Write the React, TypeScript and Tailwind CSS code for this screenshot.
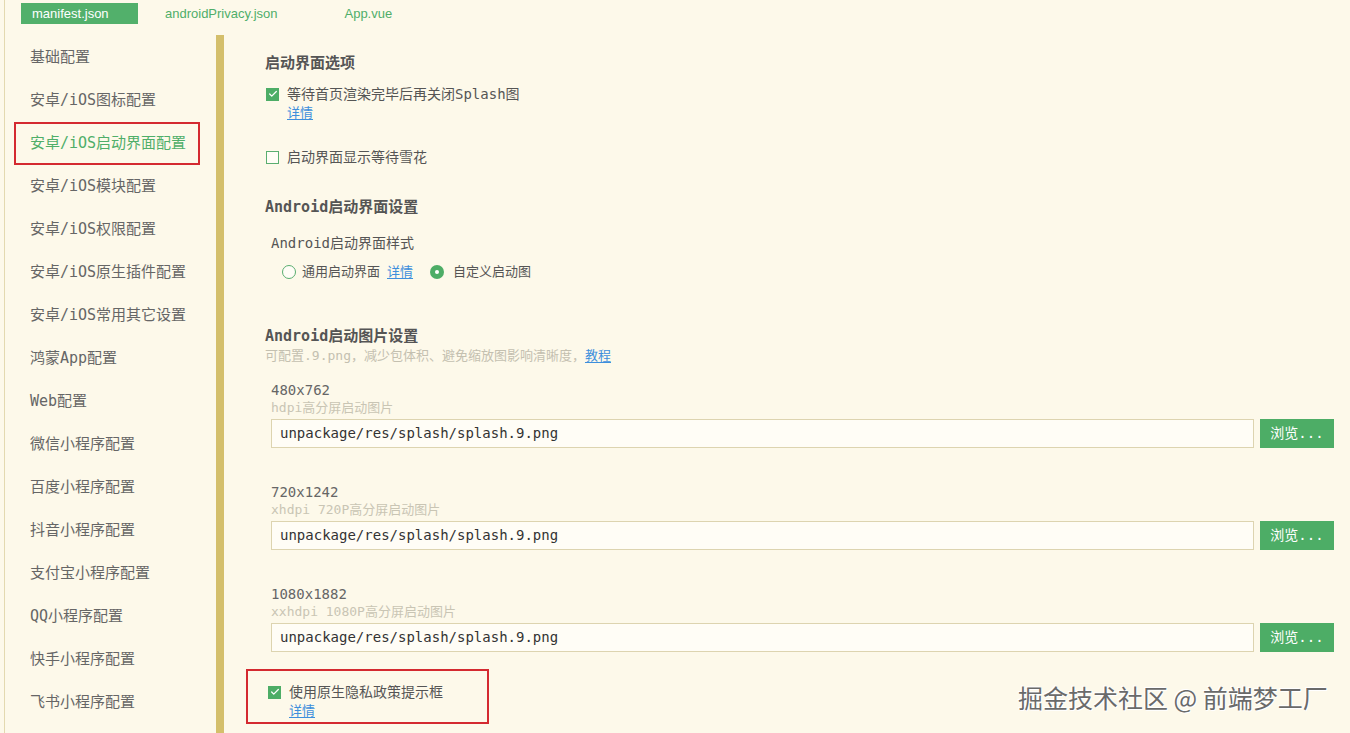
import { Check } from "lucide-react";

const mono = "font-['DejaVu_Sans_Mono','Noto_Sans_CJK_SC',monospace]";

const navItems = [
  "基础配置",
  "安卓/iOS图标配置",
  "安卓/iOS启动界面配置",
  "安卓/iOS模块配置",
  "安卓/iOS权限配置",
  "安卓/iOS原生插件配置",
  "安卓/iOS常用其它设置",
  "鸿蒙App配置",
  "Web配置",
  "微信小程序配置",
  "百度小程序配置",
  "抖音小程序配置",
  "支付宝小程序配置",
  "QQ小程序配置",
  "快手小程序配置",
  "飞书小程序配置",
];

const splashSizes = [
  { size: "480x762", desc: "hdpi高分屏启动图片" },
  { size: "720x1242", desc: "xhdpi 720P高分屏启动图片" },
  { size: "1080x1882", desc: "xxhdpi 1080P高分屏启动图片" },
];

function Checkbox({ checked }: { checked: boolean }) {
  return checked ? (
    <span className="flex h-[13px] w-[13px] shrink-0 items-center justify-center bg-[#4dad66]">
      <Check size={10} strokeWidth={3} className="text-white" />
    </span>
  ) : (
    <span className="h-[13px] w-[13px] shrink-0 border border-[#5aae70] bg-[#fffdf6]" />
  );
}

function Radio({ checked }: { checked: boolean }) {
  return checked ? (
    <span className="flex h-[14px] w-[14px] shrink-0 items-center justify-center rounded-full bg-[#4dad66]">
      <span className="h-[4px] w-[4px] rounded-full bg-white" />
    </span>
  ) : (
    <span className="h-[14px] w-[14px] shrink-0 rounded-full border border-[#5aae70] bg-[#fffdf6]" />
  );
}

function Link({ children }: { children: string }) {
  return <span className="text-[#3d8fdc] underline underline-offset-2">{children}</span>;
}

export default function App() {
  return (
    <div className={`relative h-[733px] overflow-hidden bg-[#fdf9ea] ${mono}`}>
      <div className="ml-[4px] flex h-full flex-col border-l border-[#e3d9b0]">
        {/* file tabs */}
        <div className="flex h-[30px] shrink-0 items-start pt-[3px] pl-[16px] font-['Liberation_Sans',sans-serif] text-[13px]">
          <div className="flex h-[21px] w-[117px] items-center bg-[#52b06b] pl-[11px] text-white">manifest.json</div>
          <div className="flex h-[21px] items-center pl-[27px] text-[#4fae69]">androidPrivacy.json</div>
          <div className="flex h-[21px] items-center pl-[67px] text-[#4fae69]">App.vue</div>
        </div>

        <div className="flex min-h-0 flex-1">
          {/* sidebar */}
          <div className="w-[211px] shrink-0 pt-[6px] pl-[9px]">
            {navItems.map((item, i) => (
              <div
                key={item}
                className={`flex h-[43px] w-[186px] items-center border-2 pl-[14px] text-[15px] ${
                  i === 2 ? "border-[#d42a30] text-[#4fae69]" : "border-transparent text-[#666]"
                }`}
              >
                {item}
              </div>
            ))}
          </div>
          <div className="mt-[5px] w-[8px] shrink-0 bg-[#d4bf6b]" />

          {/* settings */}
          <div className="flex min-w-0 flex-1 flex-col pt-[23px] pr-[16px] pl-[41px] text-[#555]">
            <div className="text-[15px] leading-[20px] font-bold">启动界面选项</div>
            <div className="mt-[11px] flex items-center gap-[8px] pl-[1px] text-[14px] leading-[20px]">
              <Checkbox checked />
              <span>等待首页渲染完毕后再关闭Splash图</span>
            </div>
            <div className="pl-[22px] text-[13px] leading-[18px]">
              <Link>详情</Link>
            </div>
            <div className="mt-[25px] flex items-center gap-[8px] pl-[1px] text-[14px] leading-[20px]">
              <Checkbox checked={false} />
              <span>启动界面显示等待雪花</span>
            </div>

            <div className="mt-[30px] text-[15px] leading-[20px] font-bold">Android启动界面设置</div>
            <div className="mt-[16px] ml-[6px] text-[14px] leading-[20px]">Android启动界面样式</div>
            <div className="mt-[9px] ml-[17px] flex items-center text-[13px] leading-[20px]">
              <Radio checked={false} />
              <span className="ml-[6px]">通用启动界面</span>
              <span className="ml-[7px]">
                <Link>详情</Link>
              </span>
              <span className="ml-[17px]">
                <Radio checked />
              </span>
              <span className="ml-[9px]">自定义启动图</span>
            </div>

            <div className="mt-[44px] text-[15px] leading-[20px] font-bold">Android启动图片设置</div>
            <div className="mt-[1px] text-[13px] leading-[18px] text-[#c4c0b0]">
              可配置.9.png，减少包体积、避免缩放图影响清晰度，<Link>教程</Link>
            </div>

            {splashSizes.map((s, i) => (
              <div key={s.size} className={`ml-[6px] flex flex-col ${i === 0 ? "mt-[15px]" : "mt-[34px]"}`}>
                <div className="text-[14px] leading-[20px] text-[#666]">{s.size}</div>
                <div className="text-[13px] leading-[16px] text-[#c9c5b4]">{s.desc}</div>
                <div className="mt-[3px] flex gap-[6px]">
                  <div className="flex h-[29px] flex-1 items-center border border-[#ddd4b0] bg-[#fffdf6] pl-[8px] text-[14px] text-[#333]">
                    unpackage/res/splash/splash.9.png
                  </div>
                  <button className="flex h-[29px] w-[74px] items-center justify-center bg-[#4dad66] text-[14px] text-white">
                    浏览...
                  </button>
                </div>
              </div>
            ))}

            <div className="mt-[17px] ml-[-19px] h-[55px] w-[243px] border-2 border-[#d42a30] pt-[11px] pl-[19px]">
              <div className="flex items-center gap-[8px] pl-[1px] text-[14px] leading-[20px]">
                <Checkbox checked />
                <span>使用原生隐私政策提示框</span>
              </div>
              <div className="pl-[22px] text-[13px] leading-[18px]">
                <Link>详情</Link>
              </div>
            </div>
          </div>
        </div>
      </div>

      {/* watermark */}
      <div className="absolute top-[681px] left-[1018px] font-['Noto_Sans_CJK_SC',sans-serif] text-[25px] leading-[32px] text-[#6a6a6a] [text-shadow:1px_1px_0_#fff,-1px_-1px_0_#fff,0_0_2px_#fff]">
        掘金技术社区 @ 前端梦工厂
      </div>
    </div>
  );
}
